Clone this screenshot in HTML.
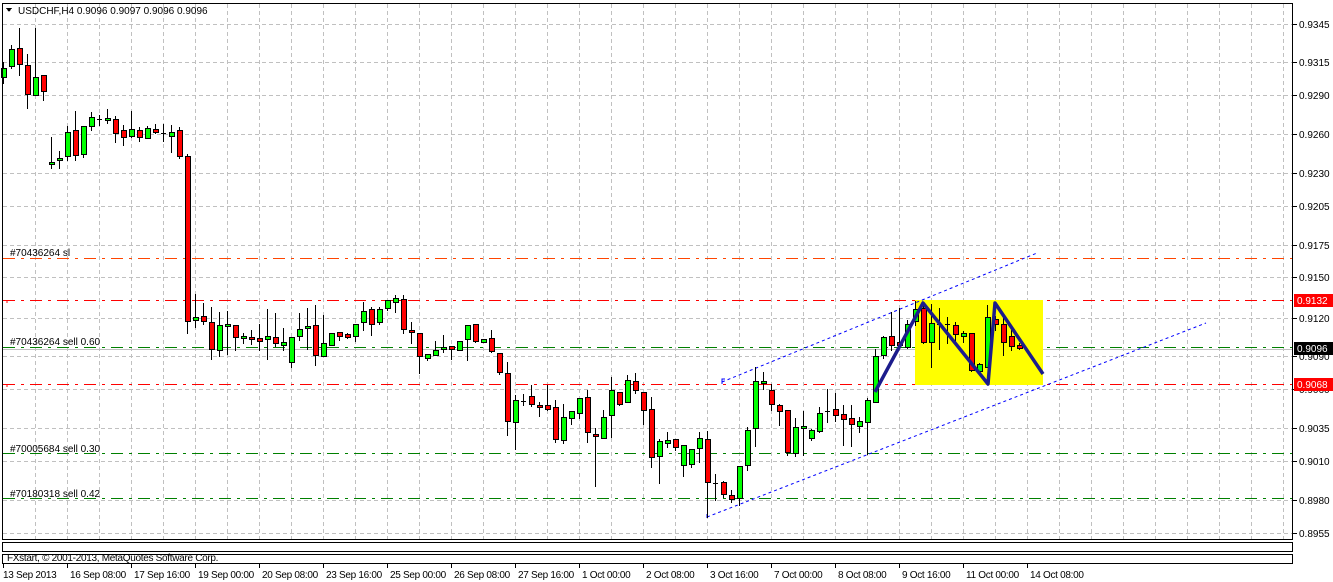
<!DOCTYPE html>
<html><head><meta charset="utf-8">
<style>
html,body{margin:0;padding:0;background:#fff;width:1333px;height:582px;overflow:hidden}
svg{display:block}
text{font-family:"Liberation Sans","DejaVu Sans",sans-serif;font-size:10px;fill:#000}
.t{font-size:10px;letter-spacing:-0.3px}
</style></head>
<body>
<svg id="s" width="1333" height="582" xmlns="http://www.w3.org/2000/svg" shape-rendering="crispEdges">
</svg>
<script>
var s=document.getElementById('s'),NS='http://www.w3.org/2000/svg';
function el(n,a,t){var e=document.createElementNS(NS,n);for(var k in a)e.setAttribute(k,a[k]);if(t!=null)e.textContent=t;s.appendChild(e);return e;}
var gy=[24,62,95,134,173,206,245,277,318,356,389,428,461,500,533];
gy.forEach(function(y){el('line',{x1:3,x2:1293,y1:y+.5,y2:y+.5,stroke:'#c0c0c0','stroke-dasharray':'4,3'});});
for(var x=35;x<1293;x+=32){el('line',{x1:x+.5,x2:x+.5,y1:4,y2:540,stroke:'#c0c0c0','stroke-dasharray':'4,3'});}
function hl(y,c,x2){el('line',{x1:3,x2:x2||1293,y1:y+.5,y2:y+.5,stroke:c,'stroke-dasharray':'12,6,3,6'});}
hl(258,'#ff4500');
hl(300,'#ff0000');hl(384,'#ff0000');
el('line',{x1:3,x2:1293,y1:349.5,y2:349.5,stroke:'#c0c0c0'});
hl(347,'#008000');hl(453,'#008000');hl(498,'#008000');
el('polyline',{points:'3,300.5 7,300.5 7,303',fill:'none',stroke:'#ff0000'});
el('polyline',{points:'3,384.5 7,384.5 7,387',fill:'none',stroke:'#ff0000'});
el('rect',{x:915,y:300,width:128,height:85,fill:'#ffff00'});
el('text',{x:10,y:256},'#70436264 sl');
el('text',{x:10,y:345},'#70436264 sell 0.60');
el('text',{x:10,y:452},'#70005684 sell 0.30');
el('text',{x:10,y:497},'#70180318 sell 0.42');
el('line',{x1:722,y1:382,x2:1037,y2:253,stroke:'#0000ff','stroke-dasharray':'3,3','shape-rendering':'auto'});
el('line',{x1:707,y1:517,x2:1206,y2:323,stroke:'#0000ff','stroke-dasharray':'3,3','shape-rendering':'auto'});
el('polyline',{points:'722,384 722,379 725,379',fill:'none',stroke:'#0000ff'});
el('polyline',{points:'707,518 707,514',fill:'none',stroke:'#0000ff'});
var d=`g 68 77 62 83|g 49 66 45 68|r 48 64 28 75|r 65 94 54 108|g 77 95 28 95|r 75 91 75 100|g 162 164 137 168|g 158 160 151 168|g 132 156 126 160|r 130 155 111 160|g 126 154 126 157|g 117 126 112 130|d 119 119 115 125|g 118 120 109 123|r 119 133 116 142|r 130 137 125 145|g 129 136 111 137|r 130 137 127 141|g 128 138 126 138|r 129 132 124 133|d 133 133 124 141|g 132 136 125 152|r 130 156 127 158|r 156 321 154 333|g 317 320 294 327|r 316 321 303 324|r 322 349 307 359|g 325 350 312 356|g 324 326 311 354|r 325 337 325 350|g 336 338 333 343|r 337 339 330 344|r 338 341 324 350|g 336 339 309 359|r 337 343 313 346|g 342 345 328 350|g 337 362 337 367|g 329 336 313 340|g 326 328 308 349|r 325 355 305 365|g 343 356 315 356|g 333 345 333 345|r 332 336 332 340|r 334 337 333 338|g 324 336 324 341|g 311 322 302 330|r 309 324 307 335|g 309 322 307 324|g 300 308 300 310|g 298 302 295 312|r 299 329 295 333|r 330 332 322 343|r 333 356 333 373|g 354 358 354 360|g 350 355 341 355|g 347 349 335 352|r 346 349 346 359|g 341 350 341 350|g 325 339 325 360|r 324 341 324 342|g 339 342 339 342|r 338 351 330 352|r 353 372 353 374|r 373 421 362 435|g 400 422 395 449|d 401 401 394 405|r 396 404 385 406|r 405 406 402 416|r 405 409 385 410|r 407 439 400 442|g 417 440 404 443|g 411 418 411 424|g 398 413 398 418|r 397 432 390 442|r 434 436 428 486|g 417 438 410 438|g 390 415 377 437|r 392 404 392 405|g 380 402 375 402|r 381 390 373 393|r 392 410 392 424|r 409 457 397 467|g 441 456 439 483|g 440 443 432 447|r 439 447 439 450|g 445 465 445 476|g 449 464 449 467|g 438 448 432 462|r 439 482 431 517|d 483 483 474 500|r 482 494 481 497|r 495 499 490 502|g 466 498 466 505|g 430 465 427 470|g 381 428 367 446|g 381 383 372 389|r 390 404 384 410|r 405 411 404 425|r 410 452 410 455|g 427 453 418 456|g 426 428 411 455|g 430 438 429 440|g 413 431 407 432|d 411 411 389 422|r 409 415 393 421|r 414 419 405 445|r 418 424 405 446|g 421 426 417 432|g 400 422 398 454|g 356 402 349 402|g 337 355 336 358|r 336 345 312 350|r 342 345 308 347|g 324 347 320 348|g 309 321 301 325|r 308 342 303 343|g 323 342 304 367|d 324 324 308 349|d 324 324 317 343|r 325 334 322 342|g 333 336 331 342|r 333 370 333 371|g 364 371 363 373|g 317 367 305 367|r 319 324 316 330|r 324 342 317 355|r 336 346 330 350|r 345 348 343 349`.split('|');
d.forEach(function(c,i){var p=c.split(' '),x=3+8*i,t=+p[1],b=+p[2],h=+p[3],l=+p[4];
 el('line',{x1:x+.5,x2:x+.5,y1:h,y2:l+1,stroke:'#000'});
 if(p[0]=='d'){el('line',{x1:x-2,x2:x+3,y1:t+.5,y2:t+.5,stroke:'#000'});}
 else{if(b-t<2)b=t+2;el('rect',{x:x-2+.5,y:t+.5,width:5,height:b-t,fill:p[0]=='g'?'#00ff00':'#ff0000',stroke:'#000'});}
});
el('polyline',{points:'875,392 923,303 988,384 995,303 1043,374',fill:'none',stroke:'#1c1c8c','stroke-width':3.5,'stroke-linejoin':'round','shape-rendering':'auto'});
el('rect',{x:2.5,y:3.5,width:1290,height:536,fill:'none',stroke:'#000'});
el('rect',{x:2.5,y:542.5,width:1290,height:9,fill:'none',stroke:'#000'});
el('rect',{x:2.5,y:554.5,width:1290,height:9,fill:'none',stroke:'#000'});
el('text',{x:7,y:561,'class':'t'},'FXstart, © 2001-2013, MetaQuotes Software Corp.');
el('polygon',{points:'6,8 12,8 9,12',fill:'#000'});
el('text',{x:18,y:14},'USDCHF,H4  0.9096 0.9097 0.9096 0.9096');
var pl=[[24,'0.9345'],[62,'0.9315'],[95,'0.9290'],[134,'0.9260'],[173,'0.9230'],[206,'0.9205'],[245,'0.9175'],[277,'0.9150'],[318,'0.9120'],[356,'0.9090'],[389,'0.9060'],[428,'0.9035'],[461,'0.9010'],[500,'0.8980'],[533,'0.8955']];
pl.forEach(function(p){el('line',{x1:1293,x2:1297,y1:p[0]+.5,y2:p[0]+.5,stroke:'#000'});el('text',{x:1299,y:p[0]+4},p[1]);});
function box(y,c,t){el('rect',{x:1294,y:y-6,width:39,height:13,fill:c});el('text',{x:1297,y:y+4,style:'fill:#fff'},t);}
box(300,'#ff0000','0.9132');box(348,'#000','0.9096');box(384,'#ff0000','0.9068');
var tl=['13 Sep 2013','16 Sep 08:00','17 Sep 16:00','19 Sep 00:00','20 Sep 08:00','23 Sep 16:00','25 Sep 00:00','26 Sep 08:00','27 Sep 16:00','1 Oct 00:00','2 Oct 08:00','3 Oct 16:00','7 Oct 00:00','8 Oct 08:00','9 Oct 16:00','11 Oct 00:00','14 Oct 08:00'];
tl.forEach(function(t,i){var x=3+64*i;el('line',{x1:x+.5,x2:x+.5,y1:564,y2:568,stroke:'#000'});el('text',{x:x+(i?3:0),y:578,'class':'t'},t);});
</script>
</body></html>
